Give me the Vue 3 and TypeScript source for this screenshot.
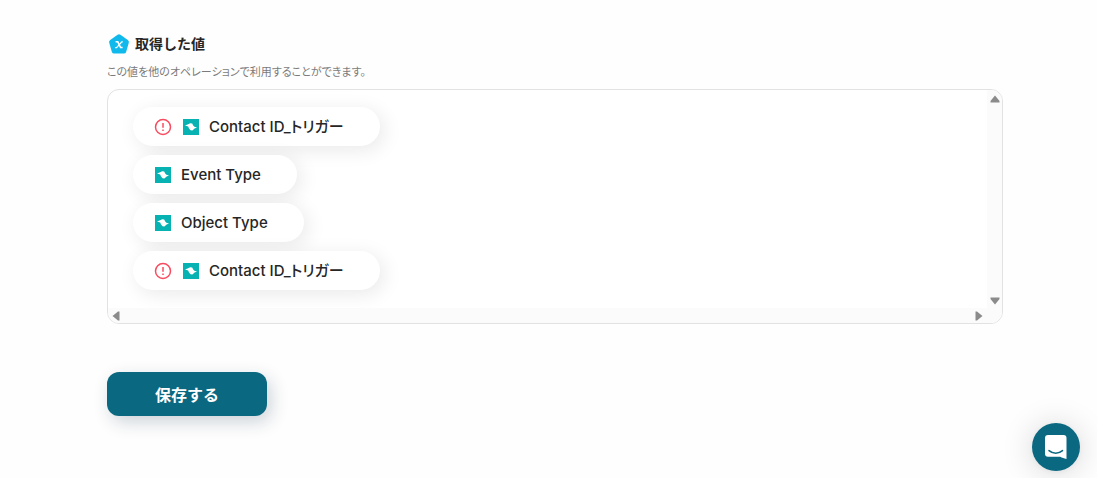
<script setup lang="ts">
interface ValueChip {
  id: number
  label: string
  required: boolean
}

const chips: ValueChip[] = [
  { id: 1, label: 'Contact ID_トリガー', required: true },
  { id: 2, label: 'Event Type', required: false },
  { id: 3, label: 'Object Type', required: false },
  { id: 4, label: 'Contact ID_トリガー', required: true },
]
</script>

<template>
  <main class="page">
    <header class="heading">
      <svg class="heading-icon" viewBox="0 0 24 24" aria-hidden="true">
        <path
          d="M10.6 2.7Q12 1.7 13.4 2.7L20.8 8Q22.3 9.1 21.8 10.8L19.2 19.7Q18.7 21.6 16.8 21.6H7.2Q5.3 21.6 4.8 19.7L2.2 10.8Q1.7 9.1 3.2 8Z"
          fill="#10b9ec"
        />
        <path
          d="M8.6 9.8H10.8L13.6 15.6H15.6"
          fill="none"
          stroke="#fff"
          stroke-width="1.5"
        />
        <path
          d="M15.8 9.8H14.8L9.6 15.6H8.2"
          fill="none"
          stroke="#fff"
          stroke-width="1.2"
        />
      </svg>
      <h2 class="title">取得した値</h2>
    </header>
    <p class="description">この値を他のオペレーションで利用することができます。</p>

    <section class="panel" aria-label="取得した値">
      <ul class="chips">
        <li v-for="chip in chips" :key="chip.id" class="chip">
          <svg v-if="chip.required" class="alert" viewBox="0 0 18 18" aria-hidden="true">
            <circle cx="9" cy="9" r="7.5" fill="none" stroke="#f94b5f" stroke-width="1.5" />
            <path d="M9 5V9.8M9 11.6V13.1" stroke="#f94b5f" stroke-width="1.5" />
          </svg>
          <svg class="app" viewBox="0 0 16 16" aria-hidden="true">
            <rect width="16" height="16" fill="#06b3b2" />
            <path
              d="M2 6.4L4.6 5.6L7.2 4.2L9.2 4.6L10.2 6.4L11.4 7.8L14 8.6L11.6 9.4L9.4 11.4L7.6 11.2L6 9.6L5.2 7.6Z"
              fill="#fff"
            />
          </svg>
          <span>{{ chip.label }}</span>
        </li>
      </ul>
      <div class="track vertical" aria-hidden="true">
        <svg class="arrow" viewBox="0 0 10 8"><path d="M5 0.5L9.5 6V7.5H0.5V6Z" fill="#8b8b8b" /></svg>
        <svg class="arrow" viewBox="0 0 10 8"><path d="M5 7.5L9.5 2V0.5H0.5V2Z" fill="#8b8b8b" /></svg>
      </div>
      <div class="track horizontal" aria-hidden="true">
        <svg class="arrow side" viewBox="0 0 8 10"><path d="M0.5 5L6 0.5H7.5V9.5H6Z" fill="#8b8b8b" /></svg>
        <svg class="arrow side" viewBox="0 0 8 10"><path d="M7.5 5L2 0.5H0.5V9.5H2Z" fill="#8b8b8b" /></svg>
      </div>
      <div class="track" aria-hidden="true"></div>
    </section>

    <button type="button" class="save">保存する</button>

    <button type="button" class="chat" aria-label="チャットを開く">
      <svg viewBox="0 0 24 26" aria-hidden="true">
        <path
          d="M4 1H19.5Q22.5 1 22.5 4V25C20 24.7 18 23.8 16.2 22.8H4Q1 22.8 1 19.8V4Q1 1 4 1Z"
          fill="#fff"
        />
        <path
          d="M5 16.6C9 20 14.5 20 18.5 16.6"
          fill="none"
          stroke="#0a6881"
          stroke-width="1.5"
          stroke-linecap="round"
        />
      </svg>
    </button>
  </main>
</template>

<style>
body {
  margin: 0;
  background: #fefefe;
}
</style>

<style scoped>
.page {
  box-sizing: border-box;
  padding: 32px 94px 62px 107px;
  color: #262626;
  font-family: Inter, 'Noto Sans CJK JP', sans-serif;
}

.heading {
  display: flex;
  align-items: center;
  gap: 4px;
  height: 24px;
}

.heading-icon {
  width: 24px;
  height: 24px;
}

.title {
  margin: 0;
  font-size: 14px;
  font-weight: 600;
  line-height: 24px;
}

.description {
  margin: 6px 0 7px;
  color: #7b7b7b;
  font-size: 11px;
  font-feature-settings: 'palt';
  line-height: 20px;
}

.panel {
  display: grid;
  grid-template-columns: 1fr 15px;
  grid-template-rows: auto 15px;
  overflow: hidden;
  border: 1px solid #e2e2e2;
  border-radius: 12px;
  background: #fff;
}

.chips {
  display: flex;
  flex-direction: column;
  align-items: flex-start;
  gap: 9px;
  overflow: hidden;
  margin: 0;
  padding: 17px 25px 18px;
  list-style: none;
}

.chip {
  display: flex;
  align-items: center;
  height: 39px;
  padding: 0 36px 0 22px;
  border-radius: 20px;
  background: #fff;
  box-shadow: 4px 4px 20px rgba(0, 0, 0, 0.09);
  font-size: 15px;
  font-weight: 500;
  font-feature-settings: 'palt';
  line-height: 20px;
  white-space: nowrap;
}

.alert {
  width: 18px;
  height: 18px;
  margin: 0 11px 0 -1px;
}

.app {
  width: 16px;
  height: 16px;
  margin-right: 10px;
}

.track {
  display: flex;
  background: #fbfbfb;
}

.vertical {
  flex-direction: column;
  align-items: center;
  justify-content: space-between;
  padding: 5px 0 3px;
}

.horizontal {
  align-items: center;
  justify-content: space-between;
  padding: 0 4px;
}

.arrow {
  width: 10px;
  height: 8px;
}

.side {
  width: 8px;
  height: 10px;
}

.save {
  width: 160px;
  height: 44px;
  margin-top: 48px;
  border: 0;
  border-radius: 12px;
  background: #0a6881;
  box-shadow: 4px 6px 18px rgba(11, 40, 70, 0.2);
  color: #fff;
  font: inherit;
  font-size: 16px;
  font-weight: 700;
  cursor: pointer;
}

.chat {
  position: fixed;
  right: 17px;
  bottom: 7px;
  display: grid;
  place-items: center;
  width: 48px;
  height: 48px;
  padding: 0;
  border: 0;
  border-radius: 50%;
  background: #0a6881;
  box-shadow: 0 1px 6px rgba(0, 0, 0, 0.06), 0 2px 32px rgba(0, 0, 0, 0.16);
  cursor: pointer;
}

.chat svg {
  width: 24px;
  height: 26px;
}
</style>
